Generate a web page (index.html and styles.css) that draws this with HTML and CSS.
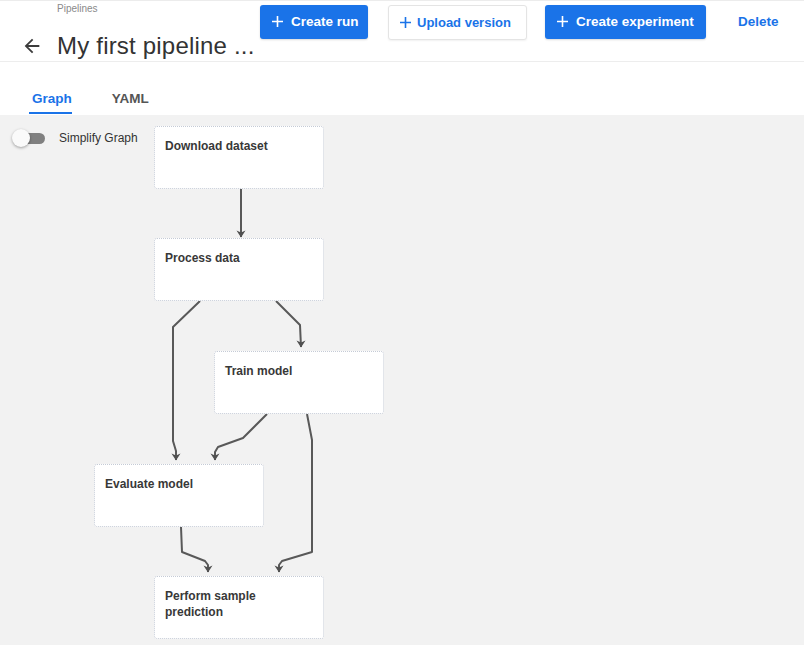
FILE: index.html
```html
<!DOCTYPE html>
<html>
<head>
<meta charset="utf-8">
<link rel="stylesheet" href="styles.css">
</head>
<body>
<div class="page">
  <header class="header">
    <div class="title-block">
      <div class="crumb">Pipelines</div>
      <div class="title-row">
        <svg class="back" width="22" height="22" viewBox="0 0 24 24"><path d="M20 11H7.83l5.59-5.59L12 4l-8 8 8 8 1.41-1.41L7.83 13H20v-2z" fill="#3c3c3c"/></svg>
        <h1 class="title">My first pipeline ...</h1>
      </div>
    </div>
    <div class="actions">
      <button class="btn btn-primary btn-run"><svg class="plus" width="11" height="11" viewBox="0 0 11 11"><path d="M5.5 0v11M0 5.5h11" stroke="currentColor" stroke-width="1.6"/></svg>Create run</button>
      <button class="btn btn-outline"><svg class="plus" width="11" height="11" viewBox="0 0 11 11"><path d="M5.5 0v11M0 5.5h11" stroke="currentColor" stroke-width="1.6"/></svg>Upload version</button>
      <button class="btn btn-primary btn-exp"><svg class="plus" width="11" height="11" viewBox="0 0 11 11"><path d="M5.5 0v11M0 5.5h11" stroke="currentColor" stroke-width="1.6"/></svg>Create experiment</button>
      <button class="btn btn-text">Delete</button>
    </div>
  </header>
  <nav class="tabs">
    <div class="tab active">Graph</div>
    <div class="tab">YAML</div>
  </nav>
  <main class="canvas">
    <div class="simplify">
      <span class="toggle"><span class="track"></span><span class="thumb"></span></span>
      <span class="simplify-label">Simplify Graph</span>
    </div>
    <svg class="edges" width="804" height="529" viewBox="0 0 804 529">
      <defs>
        <marker id="arr" markerWidth="10" markerHeight="9" refX="5" refY="8" markerUnits="userSpaceOnUse" viewBox="0 0 10 9">
          <path d="M0.5 1.5 L5 8.5 L9.5 1.5 L5 3.5 Z" fill="#505050"/>
        </marker>
      </defs>
      <g fill="none" stroke="#595959" stroke-width="2" stroke-linejoin="round">
        <path d="M241 74 L241 122" marker-end="url(#arr)"/>
        <path d="M200 186 L173 212 L173 326 L176 336 L176 345" marker-end="url(#arr)"/>
        <path d="M276 186 L300 210 L301 232" marker-end="url(#arr)"/>
        <path d="M267 299 L243 323 L218 332 L215 337 L215 345" marker-end="url(#arr)"/>
        <path d="M307 299 L312 325 L312 437 L282 446 L279 450 L279 457" marker-end="url(#arr)"/>
        <path d="M181 412 L182 437 L205 446 L208 450 L208 457" marker-end="url(#arr)"/>
      </g>
    </svg>
    <div class="node n-download"><span class="label">Download dataset</span></div>
    <div class="node n-process"><span class="label">Process data</span></div>
    <div class="node n-train"><span class="label">Train model</span></div>
    <div class="node n-evaluate"><span class="label">Evaluate model</span></div>
    <div class="node n-predict"><span class="label">Perform sample prediction</span></div>
  </main>
</div>
</body>
</html>
```
FILE: styles.css
```css
* { box-sizing: border-box; }
html, body { margin: 0; padding: 0; }
body {
  font-family: "Liberation Sans", Arial, sans-serif;
  color: #333;
  background: #fff;
  width: 804px;
  height: 645px;
  overflow: hidden;
}
.page { display: flex; flex-direction: column; height: 645px; }

.header {
  display: flex;
  align-items: flex-start;
  height: 62px;
  border-top: 1px solid #ececec;
  border-bottom: 1px solid #ededed;
}
.title-block { width: 260px; flex: none; }
.crumb {
  padding-left: 57px;
  margin-top: 2px;
  font-size: 10px;
  line-height: 12px;
  color: #8a8a8a;
}
.title-row {
  display: flex;
  align-items: center;
  margin-top: 16px;
  height: 30px;
}
.back { margin-left: 21px; flex: none; }
.title {
  margin: 0 0 0 14px;
  font-size: 24px;
  font-weight: normal;
  color: #333;
  white-space: nowrap;
  letter-spacing: 0.2px;
}

.actions {
  display: flex;
  align-items: center;
  margin-top: 2px;
}
.btn {
  display: flex;
  align-items: center;
  justify-content: flex-start;
  gap: 8px;
  height: 34px;
  padding: 0 8px 0 12px;
  border: none;
  border-radius: 3px;
  font-family: "Liberation Sans", Arial, sans-serif;
  font-weight: bold;
  font-size: 13.5px;
  white-space: nowrap;
  flex: none;
  cursor: pointer;
}
.btn-primary { background: #1a73e8; color: #fff; box-shadow: 0 1px 2px rgba(0,0,0,0.15); }
.btn-run { width: 108px; }
.btn-outline {
  background: #fff;
  color: #1a73e8;
  border: 1px solid #e4e4e4;
  box-shadow: 0 1px 2px rgba(0,0,0,0.06);
  height: 35px;
  width: 139px;
  margin-left: 20px;
  margin-top: 2px;
  font-size: 13px;
  padding-left: 11px;
  gap: 6px;
}
.btn-exp { width: 161px; margin-left: 18px; }
.btn-text {
  background: none;
  color: #1a73e8;
  margin-left: 20px;
  padding: 0 12px;
}
.plus { flex: none; }

.tabs {
  display: flex;
  align-items: flex-end;
  gap: 37px;
  height: 53px;
  padding-left: 29px;
  padding-bottom: 1px;
}
.tab {
  font-size: 13.5px;
  font-weight: bold;
  line-height: 16px;
  color: #555;
  padding: 0 0 5px 3px;
  border-bottom: 2px solid transparent;
}
.tab.active { color: #1a73e8; border-bottom-color: #1a73e8; }

.canvas {
  position: relative;
  flex: 1;
  background: #f2f2f2;
}
.simplify {
  display: flex;
  align-items: center;
  padding: 14px 0 0 12px;
}
.toggle { position: relative; width: 34px; height: 18px; display: inline-block; }
.track {
  position: absolute;
  left: 6px; top: 4px;
  width: 27px; height: 11px;
  border-radius: 6px;
  background: #808080;
}
.thumb {
  position: absolute;
  left: 0; top: 0;
  width: 18px; height: 18px;
  border-radius: 50%;
  background: #fafafa;
  box-shadow: 0 1px 3px rgba(0,0,0,0.35);
}
.simplify-label { margin-left: 13px; font-size: 12px; color: #333; }

.edges { position: absolute; left: 0; top: 0; }

.node {
  position: absolute;
  width: 170px;
  height: 63px;
  background: #fff;
  border: 1px dotted #c5cbd6;
  border-radius: 3px;
  padding: 11px 10px 0 10px;
}
.label {
  display: block;
  max-width: 125px;
  font-size: 12px;
  font-weight: bold;
  line-height: 16px;
  color: #383838;
}
.n-download { left: 154px; top: 11px; }
.n-process { left: 154px; top: 123px; }
.n-train { left: 214px; top: 236px; }
.n-evaluate { left: 94px; top: 349px; }
.n-predict { left: 154px; top: 461px; }
```
